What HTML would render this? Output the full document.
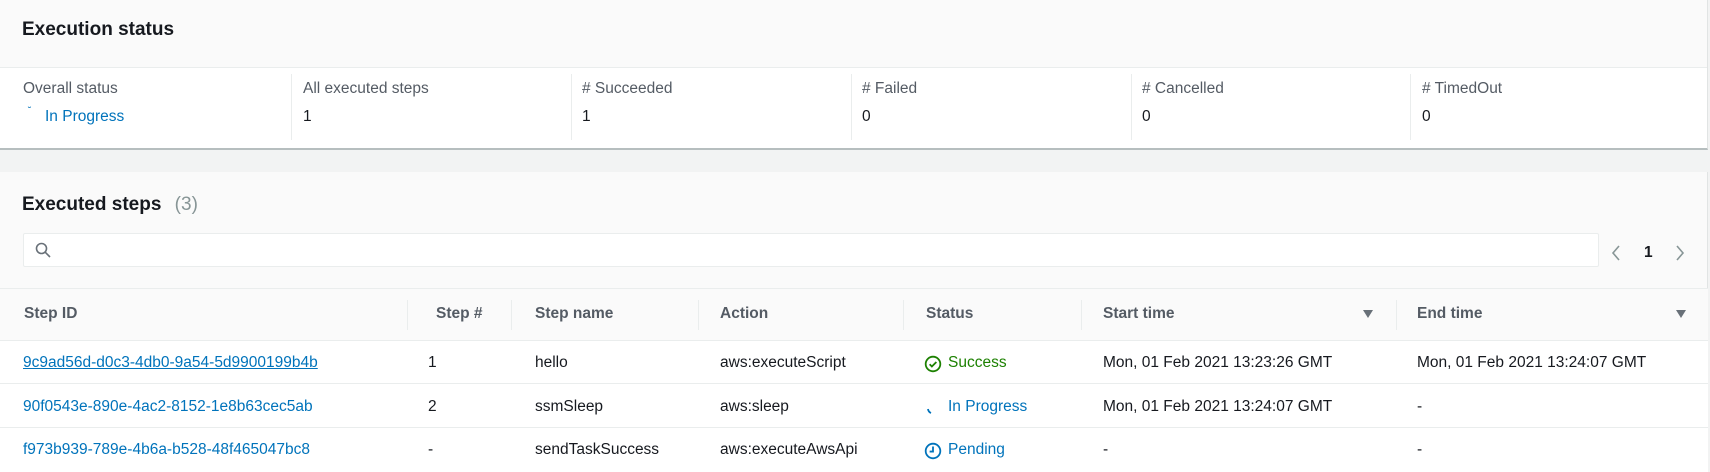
<!DOCTYPE html>
<html><head><meta charset="utf-8">
<style>
*{box-sizing:border-box;margin:0;padding:0}
body{width:1710px;height:472px;background:#f2f3f3;font-family:"Liberation Sans",sans-serif;font-size:15.5px;color:#16191f;position:relative;overflow:hidden}
.abs{position:absolute;white-space:nowrap}
.p1{position:absolute;left:0;top:0;width:1708px;height:150px;background:#fff;border-bottom:2px solid #b6bebf;border-right:1px solid #e1e4e4}
.h1{position:absolute;left:0;top:0;width:100%;height:68px;background:#fafafa;border-bottom:1px solid #eaeded}
.title{font-weight:bold;font-size:19px;color:#16191f}
.lbl{color:#545b64}
.vd{position:absolute;width:1px;background:#eaeded}
.p2{position:absolute;left:0;top:172px;width:1708px;height:300px;background:#fafafa;border-right:1px solid #e1e4e4}
.search{position:absolute;left:23px;top:233px;width:1576px;height:34px;background:#fff;border:1px solid #eaeded;border-radius:2px}
.th{position:absolute;left:0;top:288px;width:1708px;height:53px;background:#fafafa;border-top:1px solid #eaeded;border-bottom:1px solid #eaeded}
.row{position:absolute;left:0;width:1708px;background:#fff;border-bottom:1px solid #eaeded}
.b{font-weight:bold;color:#545b64}
a{color:#0073bb;text-decoration:none}
.g{color:#1d8102}
.bl{color:#0073bb}
</style></head><body>
<div class="p1"><div class="h1"></div></div>
<div class="abs title" style="left:22px;top:19px">Execution status</div>
<div class="vd" style="left:291px;top:74px;height:66px"></div>
<div class="vd" style="left:571px;top:74px;height:66px"></div>
<div class="vd" style="left:851px;top:74px;height:66px"></div>
<div class="vd" style="left:1131px;top:74px;height:66px"></div>
<div class="vd" style="left:1410px;top:74px;height:66px"></div>
<div class="abs lbl" style="left:23px;top:80px">Overall status</div>
<div class="abs bl" style="left:28px;top:106px;font-size:10px">˘</div>
<div class="abs bl" style="left:45px;top:108px">In Progress</div>
<div class="abs lbl" style="left:303px;top:80px">All executed steps</div>
<div class="abs" style="left:303px;top:108px">1</div>
<div class="abs lbl" style="left:582px;top:80px"># Succeeded</div>
<div class="abs" style="left:582px;top:108px">1</div>
<div class="abs lbl" style="left:862px;top:80px"># Failed</div>
<div class="abs" style="left:862px;top:108px">0</div>
<div class="abs lbl" style="left:1142px;top:80px"># Cancelled</div>
<div class="abs" style="left:1142px;top:108px">0</div>
<div class="abs lbl" style="left:1422px;top:80px"># TimedOut</div>
<div class="abs" style="left:1422px;top:108px">0</div>

<div class="p2"></div>
<div class="abs title" style="left:22px;top:194px">Executed steps <span style="font-weight:normal;color:#879596;margin-left:8px">(3)</span></div>
<div class="search"></div>
<svg class="abs" style="left:35px;top:242px" width="16" height="16" viewBox="0 0 16 16"><circle cx="6.5" cy="6.5" r="5" fill="none" stroke="#687078" stroke-width="1.6"/><path d="M10.3 10.3L15 15" stroke="#687078" stroke-width="1.6"/></svg>
<svg class="abs" style="left:1610px;top:244px" width="12" height="18" viewBox="0 0 12 18"><path d="M9 2L3 9l6 7" fill="none" stroke="#879596" stroke-width="1.6"/></svg>
<div class="abs" style="left:1644px;top:244px;font-weight:bold">1</div>
<svg class="abs" style="left:1674px;top:244px" width="12" height="18" viewBox="0 0 12 18"><path d="M3 2l6 7-6 7" fill="none" stroke="#879596" stroke-width="1.6"/></svg>

<div class="th"></div>
<div class="vd" style="left:407px;top:300px;height:30px"></div>
<div class="vd" style="left:511px;top:300px;height:30px"></div>
<div class="vd" style="left:698px;top:300px;height:30px"></div>
<div class="vd" style="left:903px;top:300px;height:30px"></div>
<div class="vd" style="left:1081px;top:300px;height:30px"></div>
<div class="vd" style="left:1396px;top:300px;height:30px"></div>
<div class="abs b" style="left:24px;top:305px">Step ID</div>
<div class="abs b" style="left:436px;top:305px">Step #</div>
<div class="abs b" style="left:535px;top:305px">Step name</div>
<div class="abs b" style="left:720px;top:305px">Action</div>
<div class="abs b" style="left:926px;top:305px">Status</div>
<div class="abs b" style="left:1103px;top:305px">Start time</div>
<div class="abs b" style="left:1417px;top:305px">End time</div>
<svg class="abs" style="left:1362px;top:309px" width="12" height="10"><path d="M1 1h10L6 9z" fill="#687078"/></svg>
<svg class="abs" style="left:1675px;top:309px" width="12" height="10"><path d="M1 1h10L6 9z" fill="#687078"/></svg>

<div class="row" style="top:341px;height:43px"></div>
<div class="row" style="top:384px;height:44px"></div>
<div class="row" style="top:428px;height:44px;border-bottom:none"></div>

<div class="abs" style="left:23px;top:354px"><a style="text-decoration:underline">9c9ad56d-d0c3-4db0-9a54-5d9900199b4b</a></div>
<div class="abs" style="left:428px;top:354px">1</div>
<div class="abs" style="left:535px;top:354px">hello</div>
<div class="abs" style="left:720px;top:354px">aws:executeScript</div>
<svg class="abs" style="left:924px;top:355px" width="18" height="18" viewBox="0 0 16 16"><circle cx="8" cy="8" r="6.5" fill="none" stroke="#1d8102" stroke-width="1.6"/><path d="M5 8.2l2 2 4-4" fill="none" stroke="#1d8102" stroke-width="1.6"/></svg>
<div class="abs g" style="left:948px;top:354px">Success</div>
<div class="abs" style="left:1103px;top:354px">Mon, 01 Feb 2021 13:23:26 GMT</div>
<div class="abs" style="left:1417px;top:354px">Mon, 01 Feb 2021 13:24:07 GMT</div>

<div class="abs" style="left:23px;top:398px"><a>90f0543e-890e-4ac2-8152-1e8b63cec5ab</a></div>
<div class="abs" style="left:428px;top:398px">2</div>
<div class="abs" style="left:535px;top:398px">ssmSleep</div>
<div class="abs" style="left:720px;top:398px">aws:sleep</div>
<svg class="abs" style="left:925px;top:400px" width="16" height="16" viewBox="0 0 16 16"><path d="M3 9a5 5 0 0 0 3 4" fill="none" stroke="#0073bb" stroke-width="1.8"/></svg>
<div class="abs bl" style="left:948px;top:398px">In Progress</div>
<div class="abs" style="left:1103px;top:398px">Mon, 01 Feb 2021 13:24:07 GMT</div>
<div class="abs" style="left:1417px;top:398px">-</div>

<div class="abs" style="left:23px;top:441px"><a>f973b939-789e-4b6a-b528-48f465047bc8</a></div>
<div class="abs" style="left:428px;top:441px">-</div>
<div class="abs" style="left:535px;top:441px">sendTaskSuccess</div>
<div class="abs" style="left:720px;top:441px">aws:executeAwsApi</div>
<svg class="abs" style="left:924px;top:442px" width="18" height="18" viewBox="0 0 16 16"><circle cx="8" cy="8" r="6.5" fill="none" stroke="#0073bb" stroke-width="1.6"/><path d="M8 4v4.5H5" fill="none" stroke="#0073bb" stroke-width="1.6"/></svg>
<div class="abs bl" style="left:948px;top:441px">Pending</div>
<div class="abs" style="left:1103px;top:441px">-</div>
<div class="abs" style="left:1417px;top:441px">-</div>
</body></html>
